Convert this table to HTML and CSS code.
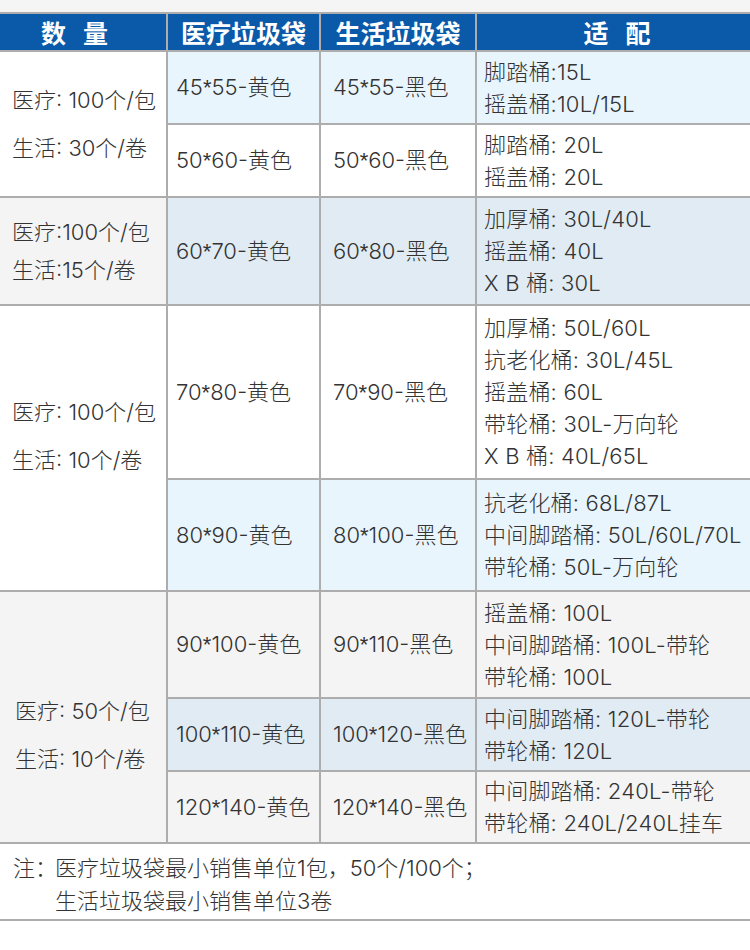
FILE: index.html
```html
<!DOCTYPE html>
<html lang="zh-CN">
<head>
<meta charset="utf-8">
<title>垃圾袋规格表</title>
<link rel="stylesheet" href="styles.css">
</head>
<body>
<div class="topband"></div>
<div class="spec">
  <div class="hd hd-spaced hd-qty">数量</div>
  <div class="hd">医疗垃圾袋</div>
  <div class="hd">生活垃圾袋</div>
  <div class="hd hd-spaced hd-fit">适配</div>

  <div class="cell qty white g1"><div>医疗: 100个/包<br>生活: 30个/卷</div></div>
  <div class="cell sz sky"><div>45<span class="ast">*</span>55-黄色</div></div>
  <div class="cell sz2 sky"><div>45<span class="ast">*</span>55-黑色</div></div>
  <div class="cell fit sky"><div>脚踏桶:15L<br>摇盖桶:10L/15L</div></div>

  <div class="cell sz white"><div>50<span class="ast">*</span>60-黄色</div></div>
  <div class="cell sz2 white"><div>50<span class="ast">*</span>60-黑色</div></div>
  <div class="cell fit white"><div>脚踏桶: 20L<br>摇盖桶: 20L</div></div>

  <div class="cell qty grey g2"><div>医疗:100个/包<br>生活:15个/卷</div></div>
  <div class="cell sz steel"><div>60<span class="ast">*</span>70-黄色</div></div>
  <div class="cell sz2 steel"><div>60<span class="ast">*</span>80-黑色</div></div>
  <div class="cell fit steel"><div>加厚桶: 30L/40L<br>摇盖桶: 40L<br>X B 桶: 30L</div></div>

  <div class="cell qty white g3"><div>医疗: 100个/包<br>生活: 10个/卷</div></div>
  <div class="cell sz white"><div>70<span class="ast">*</span>80-黄色</div></div>
  <div class="cell sz2 white"><div>70<span class="ast">*</span>90-黑色</div></div>
  <div class="cell fit white"><div>加厚桶: 50L/60L<br>抗老化桶: 30L/45L<br>摇盖桶: 60L<br>带轮桶: 30L-万向轮<br>X B 桶: 40L/65L</div></div>

  <div class="cell sz sky"><div>80<span class="ast">*</span>90-黄色</div></div>
  <div class="cell sz2 sky"><div>80<span class="ast">*</span>100-黑色</div></div>
  <div class="cell fit sky"><div>抗老化桶: 68L/87L<br>中间脚踏桶: 50L/60L/70L<br>带轮桶: 50L-万向轮</div></div>

  <div class="cell qty grey g4"><div>医疗: 50个/包<br>生活: 10个/卷</div></div>
  <div class="cell sz grey"><div>90<span class="ast">*</span>100-黄色</div></div>
  <div class="cell sz2 grey"><div>90<span class="ast">*</span>110-黑色</div></div>
  <div class="cell fit grey"><div>摇盖桶: 100L<br>中间脚踏桶: 100L-带轮<br>带轮桶: 100L</div></div>

  <div class="cell sz steel"><div>100<span class="ast">*</span>110-黄色</div></div>
  <div class="cell sz2 steel"><div>100<span class="ast">*</span>120-黑色</div></div>
  <div class="cell fit steel"><div>中间脚踏桶: 120L-带轮<br>带轮桶: 120L</div></div>

  <div class="cell sz grey"><div>120<span class="ast">*</span>140-黄色</div></div>
  <div class="cell sz2 grey"><div>120<span class="ast">*</span>140-黑色</div></div>
  <div class="cell fit grey"><div>中间脚踏桶: 240L-带轮<br>带轮桶: 240L/240L挂车</div></div>
</div>
<div class="note">
  <span class="note-label">注：</span>
  <div class="note-text">医疗垃圾袋最小销售单位1包，50个/100个；<br>生活垃圾袋最小销售单位3卷</div>
</div>
</body>
</html>
```

FILE: styles.css
```css
html, body {
  margin: 0;
  padding: 0;
  background: #ffffff;
}

body {
  width: 750px;
  font-family: "Inter", "Noto Sans CJK SC", sans-serif;
  font-weight: 300;
  color: #333333;
  font-size: 22px;
}

.topband {
  height: 12px;
  background: #f5f5f5;
}

.spec {
  display: grid;
  grid-template-columns: 166px 151px 154px 273px;
  grid-template-rows: 36px 71px 71px 106px 172px 110px 105px 71px 70px;
  gap: 2px;
  padding: 2px 0;
  background: #adadad;
}

.hd {
  display: flex;
  align-items: center;
  justify-content: center;
  background: #0b5aa9;
  color: #ffffff;
  font-family: "Noto Sans CJK SC", sans-serif;
  font-weight: 700;
  font-size: 25px;
  line-height: 30px;
}

.hd-spaced { letter-spacing: 17px; }
.hd-fit { padding-left: 24px; }

.cell {
  display: flex;
  align-items: center;
  white-space: nowrap;
  line-height: 32px;
}

.fit { letter-spacing: 0.2px; }

.ast {
  font-family: "Liberation Sans", sans-serif;
  font-weight: 400;
}

.white { background: #ffffff; }
.sky { background: #e9f5fd; }
.steel { background: #e1ebf3; }
.grey { background: #f4f4f4; }

.qty {
  grid-column: 1;
  padding-left: 12px;
  line-height: 48px;
}

.g1 { grid-row: 2 / span 2; }
.g2 { grid-row: 4; line-height: 38px; }
.g3 { grid-row: 5 / span 2; padding-bottom: 25px; }
.g4 { grid-row: 7 / span 3; padding-top: 36px; padding-left: 15px; }

.sz { padding-left: 8px; }
.sz2 { padding-left: 12px; }
.fit { padding-left: 7px; }

.note {
  display: flex;
  padding: 8px 0 1px 13px;
  line-height: 33px;
  border-bottom: 2px solid #adadad;
}

.note-label {
  flex: none;
  margin-right: -2px;
}
```
